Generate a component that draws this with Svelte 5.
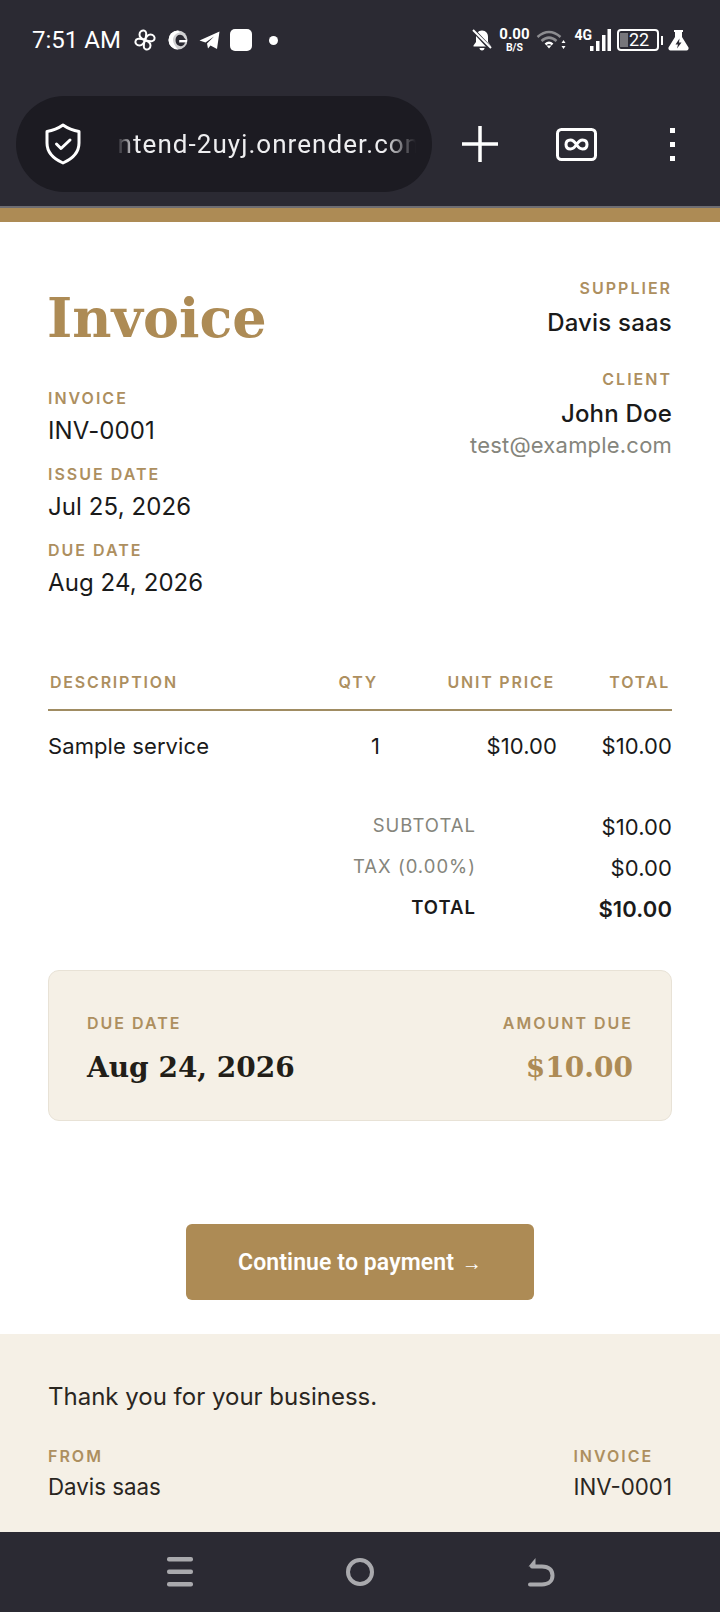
<script>
  const accent = '#ad8b55'
  const rows = [{ label: 'Subtotal', value: '$10.00' }, { label: 'Tax (0.00%)', value: '$0.00' }]
</script>

<div class="screen">
  <header class="chrome">
    <div class="status">
      <div class="status-left">
        <span class="time">7:51 AM</span>
        <svg class="ic pin" width="22" height="22" viewBox="0 0 22 22" fill="none" stroke="#fff" stroke-width="2">
          <path d="M11 11C8 10 5.500 8.500 5.500 5.500C5.500 2.500 8 1 10 1.500C12.500 2 13 5 11 11Z" />
          <path d="M11 11C12 8 13.500 5.500 16.500 5.500C19.500 5.500 21 8 20.500 10C20 12.500 17 13 11 11Z" />
          <path d="M11 11C14 12 16.500 13.500 16.500 16.500C16.500 19.500 14 21 12 20.500C9.500 20 9 17 11 11Z" />
          <path d="M11 11C10 14 8.500 16.500 5.500 16.500C2.500 16.500 1 14 1.500 12C2 9.500 5 9 11 11Z" />
        </svg>
        <svg class="ic globe" width="20" height="20" viewBox="0 0 20 20">
          <circle cx="10" cy="10" r="9.500" fill="#d0d0d2" />
          <path d="M10 .5A9.500 9.500 0 0 0 10 19.500C7 16 5 13 5 10C5 6 8 3 12 2.500Z" fill="#fff" />
          <path d="M9 6C11 4 15 4.500 16 7.500L18 10H11V12.500H17C16 16.500 12 17 9.500 15C7 12.500 7 8.500 9 6Z" fill="#2b2a33" />
          <path d="M12 10H19V12H12Z" fill="#fff" />
        </svg>
        <svg class="ic plane" width="21" height="20" viewBox="0 0 21 20">
          <path d="M.5 10.500L20.500 1.500L18 19L11.500 15.500L9 18.500L8 13.500L15 6.500L6.500 12.500Z" fill="#fff" />
        </svg>
        <span class="app-square"></span>
        <span class="dot"></span>
      </div>
      <div class="status-right">
        <svg class="ic bell" width="20" height="22" viewBox="0 0 20 22">
          <path d="M10 1.500C6 1.500 4 4.500 4 8V13L1.500 16.500V17.500H18.500V16.500L16 13V8C16 4.500 14 1.500 10 1.500Z" fill="#fff" />
          <path d="M7.500 19H12.500C12.500 20.500 11.500 21.500 10 21.500C8.500 21.500 7.500 20.500 7.500 19Z" fill="#fff" />
          <path d="M1 1L19 20" stroke="#2b2a33" stroke-width="4" />
          <path d="M1 1L19 19" stroke="#fff" stroke-width="2" />
        </svg>
        <div class="speed"><span class="speed-num">0.00</span><span class="speed-unit">B/S</span></div>
        <svg class="ic wifi" width="30" height="20" viewBox="0 0 30 20" fill="none">
          <path d="M1.500 7C9 .5 17 .5 24.500 7" stroke="#8c8c90" stroke-width="2.500" />
          <path d="M5.500 11C10.500 6.500 15.500 6.500 20.500 11" stroke="#8c8c90" stroke-width="2.500" />
          <path d="M9.500 14.500C12 12 14 12 16.500 14.500" stroke="#fff" stroke-width="2.500" />
          <path d="M10.500 15.500H15.500L13 18.500Z" fill="#fff" />
          <path d="M27.500 10L29.500 13H25.500ZM27.500 19L25.500 16H29.500Z" fill="#fff" />
        </svg>
        <div class="cell">
          <span class="net">4G</span>
          <svg class="ic" width="21" height="22" viewBox="0 0 21 22" fill="#fff">
            <rect x="0" y="17" width="3.500" height="5" />
            <rect x="6" y="12" width="3.500" height="10" />
            <rect x="12" y="6" width="3.500" height="16" />
            <rect x="17.500" y="0" width="3.500" height="22" />
          </svg>
        </div>
        <div class="battery">
          <div class="battery-body"><span class="battery-fill"></span><span class="battery-num">22</span></div>
          <span class="battery-tip"></span>
        </div>
        <svg class="ic" width="21" height="22" viewBox="0 0 21 22">
          <path d="M6 1H15V3H14V8L20.500 18.500C21 20 20 21.500 18.500 21.500H2.500C1 21.500 0 20 .5 18.500L7 8V3H6Z" fill="#fff" />
          <path d="M11.500 9.500L7.500 15.500H10L9 19.500L13.500 13.500H11Z" fill="#2b2a33" />
        </svg>
      </div>
    </div>
    <div class="toolbar">
      <div class="pill">
        <svg class="shield" width="38" height="42" viewBox="0 0 38 42" fill="none" stroke="#fff" stroke-width="3" stroke-linejoin="round" stroke-linecap="round">
          <path d="M19 2C24 5.500 29 7.500 35 8.500V20C35 29.500 28 36 19 40C10 36 3 29.500 3 20V8.500C9 7.500 14 5.500 19 2Z" />
          <path d="M12.500 21L17 25.500L26 17" />
        </svg>
        <div class="url"><span>frontend-2uyj.onrender.com</span></div>
      </div>
      <svg class="plus" width="38" height="38" viewBox="0 0 38 38" stroke="#fff" stroke-width="3.500">
        <path d="M1 19H37M19 1V37" />
      </svg>
      <svg class="tabs" width="41" height="33" viewBox="0 0 41 33" fill="none" stroke="#fff">
        <rect x="1.500" y="1.500" width="38" height="30" rx="4" stroke-width="3" />
        <path d="M20.500 16.500C18.500 13.500 16.500 12 14.500 12C11.500 12 10 14 10 16.500C10 19 11.500 21 14.500 21C16.500 21 18.500 19.500 20.500 16.500C22.500 13.500 24.500 12 26.500 12C29.500 12 31 14 31 16.500C31 19 29.500 21 26.500 21C24.500 21 22.500 19.500 20.500 16.500Z" stroke-width="3" />
      </svg>
      <div class="kebab"><span></span><span></span><span></span></div>
    </div>
  </header>
  <div class="hairline"></div>
  <div class="topbar"></div>

  <main class="page">
    <section class="head">
      <div class="head-left">
        <h1>Invoice</h1>
        <div class="meta first"><div class="label">Invoice</div><div class="value">INV-0001</div></div>
        <div class="meta"><div class="label">Issue date</div><div class="value">Jul 25, 2026</div></div>
        <div class="meta"><div class="label">Due date</div><div class="value">Aug 24, 2026</div></div>
      </div>
      <div class="head-right">
        <div class="label">Supplier</div>
        <div class="value strong">Davis saas</div>
        <div class="label client">Client</div>
        <div class="value strong">John Doe</div>
        <div class="value muted">test@example.com</div>
      </div>
    </section>

    <section class="table">
      <div class="tr th">
        <div class="label">Description</div>
        <div class="label num">Qty</div>
        <div class="label num">Unit price</div>
        <div class="label num">Total</div>
      </div>
      <div class="tr td">
        <div>Sample service</div>
        <div class="num">1</div>
        <div class="num">$10.00</div>
        <div class="num">$10.00</div>
      </div>
    </section>

    <section class="totals">
      {#each rows as row}
        <div class="sum"><span class="sum-label">{row.label}</span><span class="sum-value">{row.value}</span></div>
      {/each}
      <div class="sum grand"><span class="sum-label">Total</span><span class="sum-value">$10.00</span></div>
    </section>

    <section class="due-card">
      <div>
        <div class="label">Due date</div>
        <div class="due-value">Aug 24, 2026</div>
      </div>
      <div class="right">
        <div class="label">Amount due</div>
        <div class="due-value amount" style:color={accent}>$10.00</div>
      </div>
    </section>

    <div class="cta"><button type="button">Continue to payment <span class="arrow">→</span></button></div>
  </main>

  <footer class="foot">
    <p>Thank you for your business.</p>
    <div class="foot-row">
      <div><div class="label">From</div><div class="foot-val">Davis saas</div></div>
      <div><div class="label">Invoice</div><div class="foot-val">INV-0001</div></div>
    </div>
  </footer>

  <nav class="navbar">
    <svg width="28" height="30" viewBox="0 0 28 30" fill="#a9a9ad">
      <rect x="1" y="0" width="26" height="4.500" rx="2" />
      <rect x="1" y="12.500" width="26" height="4.500" rx="2" />
      <rect x="1" y="25" width="26" height="4.500" rx="2" />
    </svg>
    <svg width="30" height="30" viewBox="0 0 30 30" fill="none" stroke="#a9a9ad" stroke-width="4">
      <circle cx="15" cy="15" r="12" />
    </svg>
    <svg width="28" height="30" viewBox="0 0 28 30" fill="none" stroke="#a9a9ad" stroke-width="4" stroke-linecap="round">
      <path d="M3 27.500H15C22 27.500 25.500 23.500 25.500 18.500C25.500 13 22 9.500 15 9.500H5" />
      <path d="M8.500 1L1.500 9.500H8.500Z" fill="#a9a9ad" stroke="none" />
    </svg>
  </nav>
</div>

<style>
  :global(body) {
    margin: 0;
    background: #fff;
  }

  .screen {
    width: 720px;
    height: 1612px;
    display: flex;
    flex-direction: column;
    overflow: hidden;
    font-family: Inter, "Noto Sans", sans-serif;
    color: #1a1a1a;
  }

  /* browser + android bars */
  .chrome {
    height: 206px;
    background: #2b2a33;
    color: #fff;
    font-family: Roboto, sans-serif;
    flex: none;
  }

  .status {
    height: 80px;
    display: flex;
    align-items: center;
    justify-content: space-between;
    padding: 0 32px;
  }

  .status-left,
  .status-right {
    display: flex;
    align-items: center;
  }

  .ic {
    display: block;
    flex: none;
  }

  .time {
    font-size: 24px;
    width: 102px;
  }

  .globe {
    margin-left: 12px;
  }

  .plane {
    margin-left: 11px;
  }

  .app-square {
    width: 22px;
    height: 22px;
    border-radius: 5px;
    background: #fff;
    margin-left: 10px;
  }

  .dot {
    width: 9px;
    height: 9px;
    border-radius: 50%;
    background: #fff;
    margin-left: 17px;
  }

  .status-right {
    margin-right: -1px;
  }

  .speed {
    display: flex;
    flex-direction: column;
    align-items: center;
    font-weight: 700;
    margin-left: 7px;
    width: 30px;
  }

  .speed-num {
    font-size: 15px;
    line-height: 15px;
  }

  .speed-unit {
    font-size: 10.500px;
    line-height: 11px;
  }

  .wifi {
    margin-left: 7px;
  }

  .cell {
    display: flex;
    align-items: flex-end;
    margin-left: 8px;
    height: 22px;
  }

  .net {
    font-size: 14px;
    font-weight: 700;
    line-height: 14px;
    align-self: flex-start;
    margin: -1px -2px 0 0;
  }

  .battery {
    display: flex;
    align-items: center;
    margin-left: 6px;
  }

  .battery-body {
    box-sizing: border-box;
    width: 42px;
    height: 22px;
    border: 2px solid #fff;
    border-radius: 4px;
    display: flex;
    align-items: center;
    padding-left: 1px;
    gap: 1px;
  }

  .battery-fill {
    width: 8px;
    height: 14px;
    background: #77767b;
  }

  .battery-num {
    font-size: 18px;
    line-height: 18px;
  }

  .battery-tip {
    width: 2px;
    height: 9px;
    background: #fff;
    margin: 0 5px 0 2px;
  }

  .toolbar {
    height: 96px;
    margin-top: 16px;
    display: flex;
    align-items: center;
    padding-left: 16px;
  }

  .pill {
    width: 416px;
    height: 96px;
    box-sizing: border-box;
    border-radius: 48px;
    background: #1c1b22;
    display: flex;
    align-items: center;
    padding-left: 28px;
    flex: none;
  }

  .shield {
    flex: none;
  }

  .url {
    margin-left: 30px;
    width: 304px;
    overflow: hidden;
    white-space: nowrap;
    font-size: 26px;
    letter-spacing: 1.05px;
    color: #eeeef0;
    mask-image: linear-gradient(to right, transparent 4px, #000 24px, #000 272px, transparent 304px);
  }

  .url span {
    display: inline-block;
    margin-left: -30px;
  }

  .plus {
    margin-left: 29px;
    flex: none;
  }

  .tabs {
    margin-left: 57px;
    flex: none;
  }

  .kebab {
    margin-left: 73px;
    display: flex;
    flex-direction: column;
    gap: 9px;
  }

  .kebab span {
    width: 5px;
    height: 5px;
    background: #fff;
  }

  .hairline {
    height: 2px;
    background: #6e6d72;
    flex: none;
  }

  .topbar {
    height: 14px;
    background: #ad8b55;
    flex: none;
  }

  /* invoice */
  .page {
    flex: 1;
    padding: 0 48px;
    background: #fff;
  }

  .label {
    font-size: 16px;
    line-height: 20px;
    font-weight: 600;
    letter-spacing: 2px;
    text-transform: uppercase;
    color: #ad8f5f;
  }

  .value {
    font-size: 24px;
    line-height: 32px;
    letter-spacing: 0.1px;
  }

  .head {
    display: flex;
    justify-content: space-between;
    align-items: flex-start;
  }

  h1 {
    margin: 60px 0 0 -1px;
    font-family: "DejaVu Serif", serif;
    font-size: 54px;
    line-height: 72px;
    font-weight: 700;
    color: #ad8b55;
  }

  .meta {
    margin-top: 17px;
  }

  .meta.first {
    margin-top: 34px;
  }

  .meta .label {
    margin-bottom: 7px;
  }

  .head-right {
    padding-top: 56px;
    text-align: right;
  }

  .head-right .label {
    margin-bottom: 9px;
  }

  .head-right .label.client {
    margin-top: 30px;
  }

  .head-right .value {
    letter-spacing: 0.2px;
  }

  .head-right .value.muted {
    font-size: 22px;
    margin-top: -1px;
  }

  .strong {
    font-weight: 500;
  }

  .muted {
    color: #85857c;
  }

  .table {
    margin-top: 73px;
  }

  .tr {
    display: grid;
    grid-template-columns: 240px 92px 177px 115px;
  }

  .th {
    border-bottom: 2px solid #a08c62;
    padding: 0 2px 17px;
    grid-template-columns: 236px 92px 177px 115px;
  }

  .th .label {
    letter-spacing: 1.8px;
  }

  .td {
    padding-top: 19px;
    font-size: 22px;
    line-height: 32px;
    letter-spacing: 0.1px;
  }

  .num {
    text-align: right;
  }

  .totals {
    margin-top: 50px;
    display: flex;
    flex-direction: column;
    gap: 10px;
  }

  .sum {
    display: grid;
    grid-template-columns: 1fr 196px;
    text-align: right;
    align-items: start;
  }

  .sum-label {
    font-size: 18.500px;
    line-height: 26px;
    letter-spacing: 1px;
    text-transform: uppercase;
    color: #85857c;
  }

  .sum-value {
    font-size: 22px;
    line-height: 31px;
    letter-spacing: 0.1px;
  }

  .grand .sum-label {
    color: #1a1a1a;
    font-weight: 600;
  }

  .grand .sum-value {
    font-weight: 600;
  }

  .due-card {
    margin-top: 45px;
    height: 151px;
    box-sizing: border-box;
    border: 1px solid #e8e2d6;
    border-radius: 11px;
    background: #f5f0e6;
    padding: 42px 38px 0;
    display: flex;
    justify-content: space-between;
  }

  .right {
    text-align: right;
  }

  .due-value {
    margin-top: 13px;
    font-family: "DejaVu Serif", serif;
    font-size: 28px;
    line-height: 44px;
    font-weight: 700;
    color: #221e18;
  }

  .cta {
    margin-top: 103px;
    display: flex;
    justify-content: center;
  }

  button {
    width: 348px;
    height: 76px;
    border: 0;
    border-radius: 6px;
    background: #ad8b55;
    color: #fff;
    font-family: Roboto, sans-serif;
    font-size: 23px;
    font-weight: 600;
    letter-spacing: 0.1px;
  }

  .arrow {
    font-size: 20px;
    margin-left: 2px;
  }

  .foot {
    flex: none;
    height: 198px;
    box-sizing: border-box;
    background: #f5f0e6;
    padding: 46px 48px 0;
    color: #2a261f;
  }

  .foot p {
    margin: 0;
    font-size: 24px;
    line-height: 34px;
  }

  .foot-row {
    display: flex;
    justify-content: space-between;
    margin-top: 32px;
  }

  .foot-val {
    font-size: 22.300px;
    line-height: 32px;
    margin-top: 5px;
  }

  .navbar {
    flex: none;
    height: 80px;
    background: #2b2a33;
    display: flex;
    align-items: center;
    justify-content: center;
    gap: 151.500px;
  }
</style>
